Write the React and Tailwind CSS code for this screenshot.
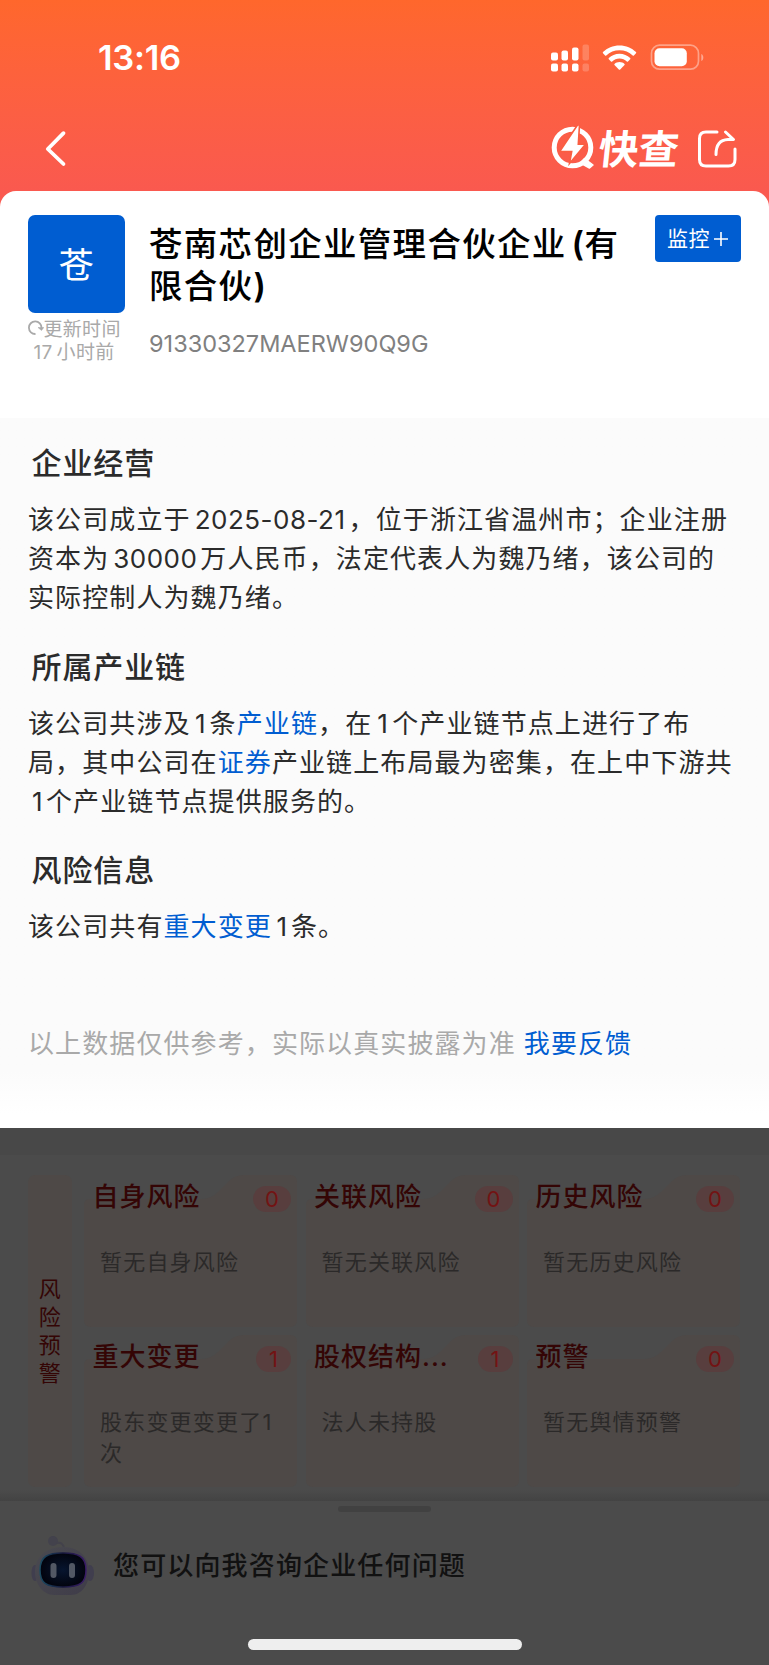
import clsx from "clsx";

const risks = [
  { title: "自身风险", count: 0, lines: ["暂无自身风险"] },
  { title: "关联风险", count: 0, lines: ["暂无关联风险"] },
  { title: "历史风险", count: 0, lines: ["暂无历史风险"] },
  { title: "重大变更", count: 1, lines: ["股东变更变更了1", "次"] },
  { title: "股权结构...", count: 1, lines: ["法人未持股"] },
  { title: "预警", count: 0, lines: ["暂无舆情预警"] },
];

function StatusBar() {
  return (
    <div className="flex h-[115px] items-center justify-between pl-[98px] pr-[61px]">
      <span className="pt-[1px] font-['Inter'] text-[34.500px] font-semibold leading-none tracking-[-0.300px]">
        13:16
      </span>
      <svg width="158" height="32" viewBox="0 0 158 32" fill="#fff">
        {/* Dual SIM signal */}
        <rect x="1" y="10.500" width="7" height="8" rx="2" />
        <rect x="11.500" y="8.500" width="6.500" height="10" rx="2" />
        <rect x="22" y="5.500" width="6.500" height="13" rx="2" />
        <rect x="32.500" y="2.500" width="6.500" height="16" rx="2" opacity=".2" />
        <rect x="1" y="21.500" width="7" height="8" rx="2" />
        <rect x="11.500" y="21.500" width="6.500" height="8" rx="2" />
        <rect x="22" y="21.500" width="6.500" height="8" rx="2" />
        <rect x="32.500" y="21.500" width="6.500" height="8" rx="2" opacity=".2" />
        {/* Wifi */}
        <g transform="translate(53 3.500)">
          <path d="M16.500 0C23 0 28.800 2.500 33 6.600Q33.500 7.200 33 7.800L30.900 9.900Q30.300 10.400 29.700 9.900C26.200 6.700 21.600 4.800 16.500 4.800S6.800 6.700 3.300 9.900Q2.700 10.400 2.100 9.900L0 7.800Q-.5 7.200 0 6.600C4.200 2.500 10 0 16.500 0Z" />
          <path d="M16.500 8.300C20.700 8.300 24.400 9.900 27.200 12.500Q27.700 13.100 27.200 13.700L25 15.900Q24.400 16.400 23.800 15.900C21.900 14.200 19.300 13.100 16.500 13.100S11.100 14.200 9.200 15.900Q8.600 16.400 8 15.900L5.800 13.700Q5.300 13.100 5.800 12.500C8.600 9.900 12.300 8.300 16.500 8.300Z" />
          <path d="M16.500 16.600C18.500 16.600 20.200 17.300 21.500 18.400Q22 19 21.500 19.600L17.200 24Q16.500 24.600 15.800 24L11.500 19.600Q11 19 11.500 18.400C12.800 17.300 14.500 16.600 16.500 16.600Z" />
        </g>
        {/* Battery */}
        <rect x="101.500" y="3.200" width="47" height="24" rx="8" fill="none" stroke="#fff" strokeOpacity=".4" strokeWidth="1.700" />
        <rect x="104.500" y="6.300" width="32.300" height="18" rx="5" />
        <path d="M151.300 12C154 13 154 18 151.300 19Z" opacity=".45" />
      </svg>
    </div>
  );
}

function NavBar() {
  return (
    <div className="flex h-[76px] items-start pl-[44px] pr-[31px] pt-[10px]">
      <svg width="24" height="48" viewBox="0 0 24 48" fill="none" stroke="#fff" strokeWidth="3.800" strokeLinecap="round" strokeLinejoin="round">
        <path d="M19.500 8.200L3.800 24L19.500 39" />
      </svg>
      <svg className="ml-auto" width="44" height="48" viewBox="0 0 44 48">
        <circle cx="21.500" cy="22.500" r="18.300" fill="none" stroke="#fff" strokeWidth="5" />
        <path d="M33.500 33.500L42 40L38.500 43L29.500 38Z" fill="#fff" stroke="#fff" strokeWidth="1.500" strokeLinejoin="round" />
        <path d="M26.500 0L28.500 0L27.300 19.300L34.500 19.300L18.500 38.500L20.700 26.500L8.700 26.500Z" fill="#fff" stroke="#fa5e41" strokeWidth="1.600" />
      </svg>
      <span className="ml-[4px] w-[82px] -skew-x-6 whitespace-nowrap font-['Noto_Sans_CJK_SC',sans-serif] text-[40px] font-bold leading-[44px]">
        快查
      </span>
      <svg className="ml-[13px]" width="44" height="48" viewBox="0 0 44 48" fill="none" stroke="#fff" strokeWidth="3" strokeLinecap="round" strokeLinejoin="round">
        <path d="M23 7H12Q5.500 7 5.500 13.500V34.500Q5.500 41 12 41H34.500Q41 41 41 34.500V24" />
        <path d="M31.500 7L39.500 14.500H34Q22 15 22 29.500" />
      </svg>
    </div>
  );
}

function CompanyHeader() {
  return (
    <div className="flex h-[227px] items-start rounded-t-[16px] bg-white pl-[27.500px] pr-[28.500px] pt-[24px]">
      <div className="w-[97.500px] shrink-0">
        <div className="flex h-[97.500px] items-center justify-center rounded-[7px] bg-[#005dd1] pt-[2px] text-[35px] text-white">
          苍
        </div>
        <div className="mt-[5px] flex items-center whitespace-nowrap text-[19px] leading-[23px] tracking-[0.300px] text-[#a9a9a9]">
          <svg className="-mt-[3px]" width="16" height="16" viewBox="0 0 16 16" fill="none" stroke="#a9a9a9" strokeWidth="1.800">
            <path d="M7.500 14A6.300 6.300 0 1 1 13.500 8" />
            <path d="M10 7.500H15.800L13.500 10.500Z" fill="#a9a9a9" strokeWidth=".5" />
          </svg>
          更新时间
        </div>
        <div className="whitespace-nowrap pl-[6px] text-[19px] leading-[23px] tracking-[0.300px] text-[#a9a9a9]">
          17<span className="ml-[4px]">小时前</span>
        </div>
      </div>
      <div className="ml-[24px] pt-[8px]">
        <h1 className="whitespace-nowrap text-[33.500px] font-medium leading-[42px] tracking-[1.300px] text-black">
          苍南芯创企业管理合伙企业<span className="-mr-[1px] ml-[5px] font-semibold">(</span>有
          <br />
          限合伙<span className="font-semibold">)</span>
        </h1>
        <p className="mt-[21px] text-[23.500px] leading-[32px] text-[#808080]">
          91330327MAERW90Q9G
        </p>
      </div>
      <button className="ml-auto flex h-[47px] w-[86px] shrink-0 items-center justify-center gap-[4px] whitespace-nowrap rounded-[4px] bg-[#005dd1] pt-[1px] text-[21px] tracking-[0.500px] text-white">
        监控
        <svg width="14" height="14" viewBox="0 0 14 14" stroke="#fff" strokeWidth="1.600">
          <path d="M7 0V14M0 7H14" />
        </svg>
      </button>
    </div>
  );
}

function Num({ className, children }) {
  return (
    <span className={clsx("inline-block pl-[1px] text-center tracking-[0.500px]", className)}>
      {children}
    </span>
  );
}

function Link({ children }) {
  return <a className="text-[#005dd1]">{children}</a>;
}

function Section({ title, className, children }) {
  return (
    <section className={className}>
      <h2 className="pl-[3.500px] text-[30px] font-medium leading-[40px] tracking-[0.900px] text-[#2b2b2b]">
        {title}
      </h2>
      <div className="mt-[17px] whitespace-nowrap text-[26px] leading-[39px] tracking-[1.100px] text-[#2b2b2b]">
        {children}
      </div>
    </section>
  );
}

function CompanySummary() {
  return (
    <div className="h-[710px] bg-linear-to-b from-[#fbfbfb] from-92% to-white to-98% pl-[28px] pt-[25px]">
      <Section title="企业经营" className="h-[203.500px]">
        <p>
          该公司成立于<Num className="w-[158px]">2025-08-21</Num>，位于浙江省温州市；企业注册
        </p>
        <p>
          资本为<Num className="w-[91px]">30000</Num>万人民币，法定代表人为魏乃绪，该公司的
        </p>
        <p>实际控制人为魏乃绪。</p>
      </Section>
      <Section title="所属产业链" className="h-[203.500px]">
        <p>
          该公司共涉及<Num className="w-[19px]">1</Num>条<Link>产业链</Link>，在
          <Num className="w-[20px]">1</Num>个产业链节点上进行了布
        </p>
        <p>
          局，其中公司在<Link>证券</Link>产业链上布局最为密集，在上中下游共
        </p>
        <p>
          <Num className="w-[18px]">1</Num>个产业链节点提供服务的。
        </p>
      </Section>
      <Section title="风险信息" className="h-[174px]">
        <p>
          该公司共有<Link>重大变更</Link>
          <Num className="w-[19px]">1</Num>条。
        </p>
      </Section>
      <p className="whitespace-nowrap text-[26px] leading-[39px] tracking-[1.100px] text-[#a9a9a9]">
        以上数据仅供参考，实际以真实披露为准
        <span className="ml-[8px]">
          <Link>我要反馈</Link>
        </span>
      </p>
    </div>
  );
}

function RiskCard({ title, count, lines }) {
  return (
    <div className="relative h-[152px] w-[213px]">
      <svg className="absolute inset-0" width="213" height="152" viewBox="0 0 213 152">
        <path
          d="M0 30Q0 24 6 24H118Q127 24 134 17L145 6Q151 0 160 0H206Q213 0 213 7V145Q213 152 206 152H7Q0 152 0 145Z"
          fill="#4e4947"
        />
      </svg>
      <div className="relative">
        <div className="flex h-[48px] items-start justify-between pl-[8.500px] pr-[6px]">
          <h3 className="whitespace-nowrap pt-[2px] text-[26px] font-medium leading-[40px] tracking-[1px] text-[#340505]">
            {title}
          </h3>
          <span
            className={clsx(
              "mt-[11px] flex h-[26px] items-center justify-center rounded-full bg-[#583e3e] text-[22px] text-[#731313]",
              count ? "w-[35px]" : "w-[38px]"
            )}
          >
            {count}
          </span>
        </div>
        <div className="whitespace-nowrap pl-[16px] pt-[24px] text-[22px] leading-[31px] tracking-[1.200px] text-[#2b2929]">
          {lines.map((line) => (
            <p key={line}>{line}</p>
          ))}
        </div>
      </div>
    </div>
  );
}

function RiskPanel() {
  return (
    <div className="h-[373px] bg-[#4b4b4b]">
      <div className="h-[27px] bg-[#484848]" />
      <div className="flex gap-[12px] px-[27.500px] pt-[20px]">
        <div className="flex h-[312px] w-[44.500px] flex-col items-center justify-center rounded-[7px] bg-[#4e4947] text-[22px] leading-[28px] text-[#340505]">
          {["风", "险", "预", "警"].map((char) => (
            <span key={char}>{char}</span>
          ))}
        </div>
        <div className="grid grid-cols-3 gap-x-[8.500px] gap-y-[8px]">
          {risks.map((risk) => (
            <RiskCard key={risk.title} {...risk} />
          ))}
        </div>
      </div>
      <div className="mt-[3px] h-[11px] bg-linear-to-b from-[#4b4b4b] to-[#434343]" />
    </div>
  );
}

function Robot() {
  return (
    <svg width="64" height="62" viewBox="0 0 64 62">
      <defs>
        <linearGradient id="shell" x1="0" y1="0" x2="1" y2="1">
          <stop offset="0" stopColor="#4a4a50" />
          <stop offset="1" stopColor="#3f3c49" />
        </linearGradient>
        <linearGradient id="rim" x1="0" y1="0" x2="1" y2="0">
          <stop offset="0" stopColor="#1b4b61" />
          <stop offset=".5" stopColor="#17183d" />
          <stop offset="1" stopColor="#3a1c68" />
        </linearGradient>
        <radialGradient id="face">
          <stop offset="0" stopColor="#07152f" />
          <stop offset="1" stopColor="#02040e" />
        </radialGradient>
      </defs>
      <circle cx="22" cy="7" r="5" fill="#43424c" />
      <path d="M26 9Q32 8 33 14" fill="none" stroke="#43424b" strokeWidth="2" />
      <ellipse cx="4" cy="39" rx="3.500" ry="8" fill="#403e4e" />
      <ellipse cx="59" cy="39" rx="4" ry="8" fill="#403e4e" />
      <path d="M32 13C49 13 58 24 58 38C58 50 51 61 40 61H23C12 61 4 50 4 38C4 24 14 13 32 13Z" fill="url(#shell)" />
      <path d="M32 19C47 19 55 22 55 36C55 49 49 53 32 53S9 49 9 36C9 22 17 19 32 19Z" fill="url(#face)" stroke="url(#rim)" strokeWidth="1.500" />
      <rect x="19.500" y="29" width="6" height="15" rx="3" fill="#525864" />
      <rect x="38" y="29" width="6" height="15" rx="3" fill="#525864" />
    </svg>
  );
}

function AskBar() {
  return (
    <div className="flex h-[164px] flex-col items-center bg-[#4b4b4b]">
      <div className="mt-[5px] h-[6px] w-[93px] rounded-full bg-[#414141]" />
      <div className="mt-[22px] flex w-full items-center pl-[31px]">
        <Robot />
        <span className="ml-[18px] pt-[1px] text-[26px] font-medium leading-[40px] tracking-[1.150px] text-[#111]">
          您可以向我咨询企业任何问题
        </span>
      </div>
      <div className="mt-[43px] h-[11px] w-[274px] rounded-full bg-[#eee]" />
    </div>
  );
}

export default function App() {
  return (
    <main className="h-[1665px] w-[769px] overflow-hidden bg-[#4b4b4b] font-['Inter','Noto_Sans_CJK_SC',sans-serif]">
      <div className="bg-linear-to-b from-[#ff672c] to-[#fa594f] to-[191px] text-white">
        <StatusBar />
        <NavBar />
        <CompanyHeader />
      </div>
      <CompanySummary />
      <RiskPanel />
      <AskBar />
    </main>
  );
}
